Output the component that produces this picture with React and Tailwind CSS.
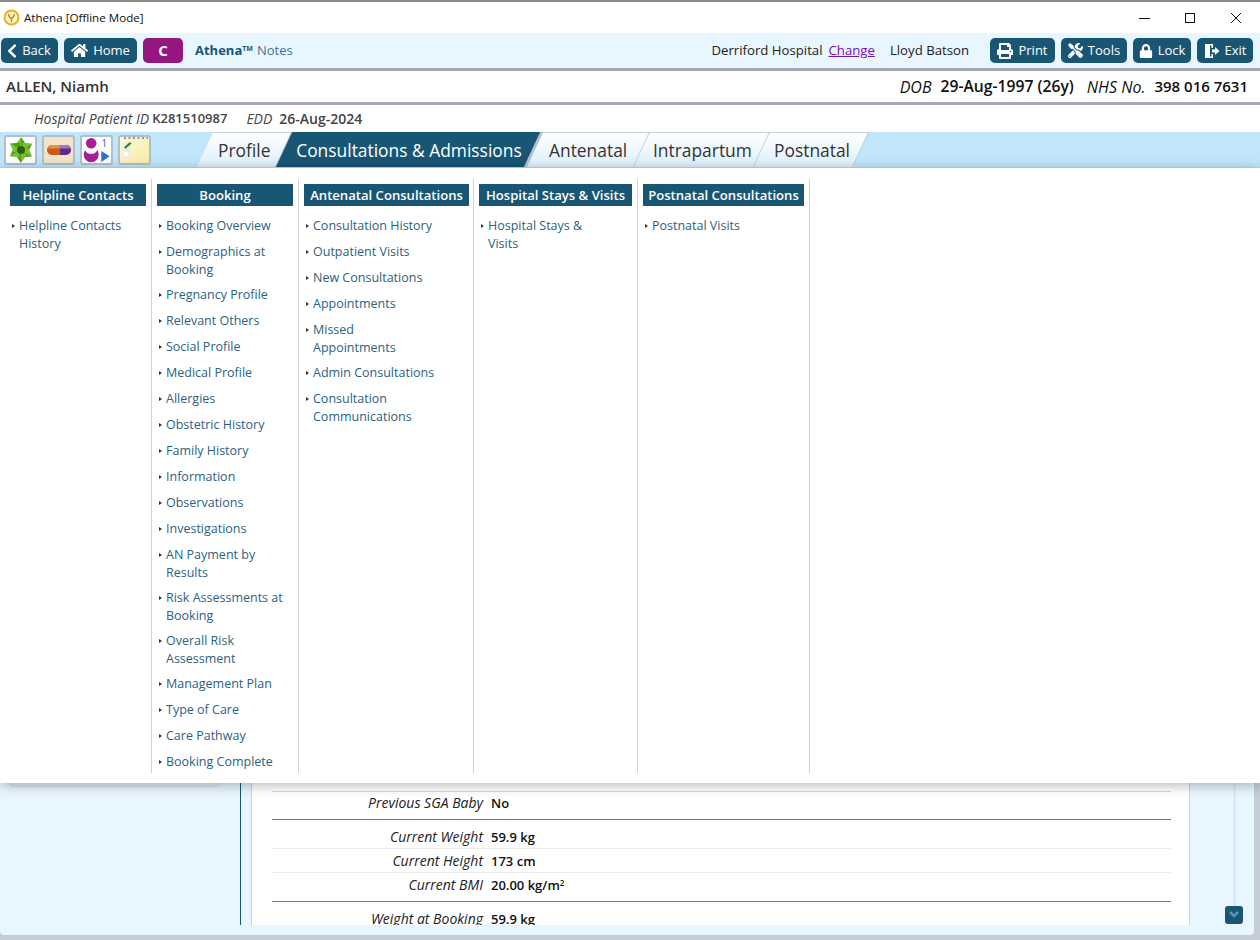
import { FaChevronLeft, FaHome, FaPrint, FaTools, FaLock } from 'react-icons/fa';

const FONT = "font-['Open_Sans','Noto_Sans',sans-serif]";

const COLUMNS = [
  {
    title: 'Helpline Contacts', wrap: 'ml-[5px] pl-[5px] w-[147px]', head: 'w-[136px]',
    items: ['Helpline Contacts\nHistory'],
  },
  {
    title: 'Booking', wrap: 'pl-[5px] w-[147px]', head: 'w-[136px]',
    items: [
      'Booking Overview', 'Demographics at\nBooking', 'Pregnancy Profile', 'Relevant Others', 'Social Profile',
      'Medical Profile', 'Allergies', 'Obstetric History', 'Family History', 'Information', 'Observations',
      'Investigations', 'AN Payment by\nResults', 'Risk Assessments at\nBooking', 'Overall Risk\nAssessment',
      'Management Plan', 'Type of Care', 'Care Pathway', 'Booking Complete',
    ],
  },
  {
    title: 'Antenatal Consultations', wrap: 'pl-[5px] w-[175px]', head: 'w-[165px]',
    items: [
      'Consultation History', 'Outpatient Visits', 'New Consultations', 'Appointments', 'Missed\nAppointments',
      'Admin Consultations', 'Consultation\nCommunications',
    ],
  },
  {
    title: 'Hospital Stays & Visits', wrap: 'pl-[5px] w-[164px]', head: 'w-[153px]',
    items: ['Hospital Stays &\nVisits'],
  },
  {
    title: 'Postnatal Consultations', wrap: 'pl-[5px] w-[172px]', head: 'w-[161px]',
    items: ['Postnatal Visits'],
  },
];

const TABS = [
  { label: 'Profile', width: 'w-[79px]' },
  { label: 'Consultations & Admissions', width: 'w-[251px]', active: true },
  { label: 'Antenatal', width: 'w-[107px]' },
  { label: 'Intrapartum', width: 'w-[120px]' },
  { label: 'Postnatal', width: 'w-[99px]' },
];

function ExitIcon() {
  return (
    <svg width="16" height="16" viewBox="0 0 16 16" fill="white">
      <path d="M1 1h8v4H7.500V2.500H4.500l-1 1v9l1 1h3V11H9v4H1z" />
      <path d="M3 2.500l3-1v13l-3-1z" />
      <path d="M8 6.500h3V4l4.500 4-4.500 4V9.500H8z" />
    </svg>
  );
}

function ToolButton({ icon, label, className }) {
  return (
    <div className={`h-[25px] bg-[#185674] rounded-[5px] flex items-center justify-center gap-[5px] text-white text-[13px] ${className}`}>
      {icon}
      <span>{label}</span>
    </div>
  );
}

function StarIcon() {
  return (
    <svg width="28" height="26" viewBox="0 0 28 26">
      {[0, 60, 120, 180, 240, 300].map((a) => (
        <g key={a} transform={`rotate(${a} 14 13)`}>
          <path d="M14 0l-5.500 8 5.500 5z" fill="#74c22e" />
          <path d="M14 0l5.500 8-5.500 5z" fill="#4f9e1a" />
        </g>
      ))}
      <circle cx="14" cy="13" r="4" fill="#2e5f0e" />
    </svg>
  );
}

function PillIcon() {
  return (
    <svg width="26" height="12" viewBox="0 0 26 12">
      <path d="M6 1h7.500v10H6a5 5 0 0 1 0-10z" fill="#cf5a14" />
      <path d="M13.500 1H20a5 5 0 0 1 0 10h-6.500z" fill="#5d2a86" />
      <path d="M6 1h7.500v3.500H2a5 5 0 0 1 4-3.500z" fill="#e8924f" />
      <path d="M13.500 1H20a5 5 0 0 1 4 3.500H13.500z" fill="#a675c9" />
    </svg>
  );
}

function PersonIcon() {
  return (
    <svg width="30" height="27" viewBox="0 0 30 27">
      <circle cx="9.500" cy="7" r="5.500" fill="#aa1f97" />
      <path d="M3 14c1.500 3 3.500 4 6.500 4s5-1 6.500-4c1 2 1.200 3.500 1.200 5a7.700 7.700 0 0 1-15.400 0c0-1.500.2-3 1.700-5z" fill="#aa1f97" />
      <text x="20" y="11" fontSize="11" fill="#2f6fc8" fontFamily="Open Sans">1</text>
      <path d="M20 15l8.500 5.500-8.500 6z" fill="#2a6fd0" />
    </svg>
  );
}

function NoteIcon() {
  return (
    <svg width="29" height="27" viewBox="0 0 29 27">
      <defs>
        <linearGradient id="note" x1="0" y1="0" x2="1" y2="1">
          <stop offset="0" stopColor="#fdf9dc" />
          <stop offset="1" stopColor="#f7eca8" />
        </linearGradient>
      </defs>
      <rect x="0" y="0" width="29" height="27" fill="url(#note)" />
      <path d="M4 2h24" stroke="#777" strokeWidth="1.500" strokeDasharray="2 2.500" />
      <rect x="3" y="15" width="6" height="6" fill="white" stroke="#e3e3e3" />
      <rect x="3" y="8" width="6" height="5" fill="white" stroke="#e3e3e3" />
      <path d="M4 11l6-5 1.500 1.500-6 5.500z" fill="#3a8a1a" />
    </svg>
  );
}

function IconBox({ children, className = 'bg-white' }) {
  return (
    <div className={`w-[33px] h-[30px] rounded-[3px] border-2 border-[#aebfcd] overflow-hidden flex items-center justify-center ${className}`}>
      {children}
    </div>
  );
}

function Row({ label, value, line, className = '' }) {
  const lineCls = line === 'light' ? 'border-[#ececec]' : 'border-transparent';
  return (
    <div className={`ml-[20px] mr-[18px] h-[24px] pt-[2px] flex items-center border-b shrink-0 ${lineCls} ${className}`}>
      <span className="w-[211px] pb-[2px] text-right italic text-[14px] text-[#222] whitespace-nowrap">{label}</span>
      <span className="ml-[8px] font-semibold text-[13px] text-[#111]">{value}</span>
    </div>
  );
}

export default function App() {
  return (
    <div className={`${FONT} w-[1260px] h-[940px] overflow-hidden flex flex-col bg-[#c5ccd6] border-t-2 border-[#8a8a8a]`}>
      {/* title bar */}
      <div className="h-[31px] bg-white flex items-center shrink-0 pl-[3px]">
        <svg width="17" height="17" viewBox="0 0 17 17">
          <circle cx="8.500" cy="8.500" r="7" fill="#fdf3cf" stroke="#eab020" strokeWidth="2" />
          <path d="M5.500 5c0 3 1.500 3.500 3 4.500 1.500-1 3-1.500 3-4.500M8.500 9v4" fill="none" stroke="#b58a12" strokeWidth="1.400" />
        </svg>
        <span className="ml-[4px] text-[11.600px] text-[#111]">Athena [Offline Mode]</span>
        <div className="ml-auto flex items-center">
          <svg width="46" height="12" viewBox="0 0 46 12"><path d="M18 6.500h11" stroke="#111" /></svg>
          <svg width="46" height="12" viewBox="0 0 46 12"><rect x="18.500" y="1.500" width="9" height="9" fill="none" stroke="#111" /></svg>
          <svg width="46" height="12" viewBox="0 0 46 12" className="mr-[1px]"><path d="M18 1l10 10M28 1L18 11" stroke="#111" /></svg>
        </div>
      </div>

      {/* toolbar */}
      <div className="h-[35px] bg-[#e8f6ff] flex items-center shrink-0 pl-[1px] pr-[7px] text-[13.200px]">
        <ToolButton icon={<FaChevronLeft size={16} className="-ml-[4px] -mr-[3px]" />} label="Back" className="w-[57px]" />
        <ToolButton icon={<FaHome size={17} />} label="Home" className="w-[73px] ml-[6px]" />
        <div className="w-[40px] h-[25px] ml-[6px] bg-[#93177e] rounded-[5px] flex items-center justify-center text-white font-bold text-[15px]">C</div>
        <span className="ml-[12px] font-bold text-[#185674] text-[13px]">Athena<sup className="text-[7px] font-bold">TM</sup></span>
        <span className="ml-[4px] text-[#3f7590] text-[13px]">Notes</span>
        <span className="ml-auto text-[#222]">Derriford Hospital</span>
        <span className="ml-[6px] underline text-[#7a10b8]">Change</span>
        <span className="ml-[15px] text-[#222]">Lloyd Batson</span>
        <ToolButton icon={<FaPrint size={16} />} label="Print" className="w-[65px] ml-[21px]" />
        <ToolButton icon={<FaTools size={15} />} label="Tools" className="w-[66px] ml-[6px]" />
        <ToolButton icon={<FaLock size={14} />} label="Lock" className="w-[58px] ml-[6px]" />
        <ToolButton icon={<ExitIcon />} label="Exit" className="w-[56px] ml-[6px]" />
      </div>

      {/* patient banner */}
      <div className="h-[37px] bg-white border-y-[3px] border-[#a2a9b3] flex items-center justify-between shrink-0 px-[6px] pr-[12px] text-[#222]">
        <span className="text-[15px] font-semibold text-[#333]">ALLEN, Niamh</span>
        <span className="text-[15px] text-[#111] flex items-center">
          <i className="text-[16px]">DOB</i>
          <span className="ml-[9px] font-semibold text-[15.700px]">29-Aug-1997 (26y)</span>
          <i className="ml-[13px] text-[16px]">NHS No.</i>
          <span className="ml-[9px] font-semibold">398 016 7631</span>
        </span>
      </div>

      {/* patient details */}
      <div className="h-[27px] bg-white flex items-center shrink-0 pl-[34px] text-[14px] text-[#444]">
        <i>Hospital Patient ID</i>
        <span className="ml-[3px] font-semibold text-[13px]">K281510987</span>
        <i className="ml-[19px]">EDD</i>
        <span className="ml-[7px] font-semibold">26-Aug-2024</span>
      </div>

      {/* icons + tabs */}
      <div className="h-[36px] bg-[#c1e6fc] border-b border-[#cfd6dc] flex items-center shrink-0 pl-[4px] overflow-hidden">
        <div className="flex gap-[5px]">
          <IconBox><StarIcon /></IconBox>
          <IconBox className="bg-[#f1e4c9]"><PillIcon /></IconBox>
          <IconBox><PersonIcon /></IconBox>
          <IconBox className="bg-[#fbf3bf]"><NoteIcon /></IconBox>
        </div>
        <div className="flex h-full ml-[54px]">
          {TABS.map((t) => (
            <div
              key={t.label}
              className={`${t.width} h-full -skew-x-[25deg] flex items-center justify-center border-r ${
                t.active
                  ? 'bg-[#185674] border-[#b6c2d0] border-r-[3px]'
                  : 'bg-gradient-to-b from-white to-[#ddf0fb] border-t border-[#c9d0d6]'
              }`}
            >
              <span className={`skew-x-[25deg] pl-[1px] text-[17.400px] font-medium whitespace-nowrap ${t.active ? 'pt-[2px] text-white' : 'pt-[1px] text-[#333]'}`}>
                {t.label}
              </span>
            </div>
          ))}
        </div>
      </div>

      {/* menu */}
      <div className="relative z-10 h-[615px] bg-white shadow-[0_2px_12px_rgba(0,0,0,0.3)] flex items-start pt-[11px] pr-[5px] shrink-0">
        {COLUMNS.map((col) => (
          <div key={col.title} className={`${col.wrap} h-[594px] border-r border-[#cfd3d6] pt-[5px]`}>
            <div className={`${col.head} h-[22px] pt-[2px] bg-[#185674] text-white font-semibold text-[13.100px] flex items-center justify-center whitespace-nowrap`}>
              {col.title}
            </div>
            <div className="mt-[11px] flex flex-col">
              {col.items.map((item) => (
                <div
                  key={item}
                  className={`flex text-[12.500px] leading-[18px] text-[#2c6280] ${item.includes('\n') ? 'mb-[7px]' : 'mb-[8px]'}`}
                >
                  <span className="w-[9px] shrink-0 pl-[2px] pt-[7px]">
                    <span className="block w-0 h-0 border-y-[2px] border-y-transparent border-l-[3px] border-l-[#333]" />
                  </span>
                  <span className="whitespace-pre-line">{item}</span>
                </div>
              ))}
            </div>
          </div>
        ))}
      </div>

      {/* page behind the menu */}
      <div className="h-[142px] flex shrink-0 bg-[#e8f6ff] mr-[6px] overflow-hidden">
        <div className="w-[240px] shrink-0 pl-[10px]">
          <div className="w-[210px] h-[4px] bg-[#e2eef6] border-b border-x border-[#d3e2ec] rounded-b-[4px]" />
        </div>
        <div className="w-[1px] bg-[#185674] shrink-0" />
        <div className="w-[939px] shrink-0 ml-[10px] bg-white border-x border-[#d2d2d2] flex flex-col overflow-hidden">
          <div className="h-[9px] border-b border-[#d8d8d8] ml-[20px] mr-[18px] shrink-0" />
          <Row label="Previous SGA Baby" value="No" line="none" className="-mt-[1px]" />
          <div className="h-[5px] border-b border-[#62808f] ml-[20px] mr-[18px] shrink-0" />
          <div className="h-[5px] shrink-0" />
          <Row label="Current Weight" value="59.9 kg" line="light" />
          <Row label="Current Height" value="173 cm" line="light" />
          <Row label="Current BMI" value={<>20.00 kg/m<sup className="text-[8px]">2</sup></>} line="none" />
          <div className="h-[5px] border-b border-[#62808f] ml-[20px] mr-[18px] shrink-0" />
          <div className="h-[5px] shrink-0" />
          <Row label="Weight at Booking" value="59.9 kg" line="none" />
        </div>
        <div className="flex-1 flex flex-col items-center pl-[35px] pr-[11px] pb-[1px]">
          <div className="w-[3px] flex-1 bg-[#d3edfb]" />
          <div className="w-[18px] h-[18px] bg-[#185674] rounded-[3px] flex items-center justify-center shrink-0">
            <svg width="12" height="10" viewBox="0 0 12 10"><path d="M2 2l4 4 4-4" fill="none" stroke="#5f94ad" strokeWidth="2.500" /></svg>
          </div>
        </div>
      </div>
      <div className="h-[10px] bg-[#e8f6ff] mr-[6px] rounded-b-[4px] shrink-0" />
    </div>
  );
}
